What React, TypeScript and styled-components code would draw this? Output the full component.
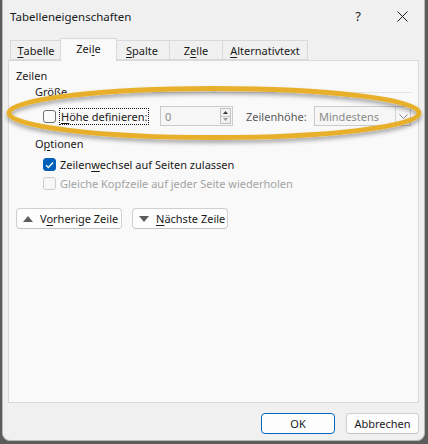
import React from 'react';
import styled, { createGlobalStyle } from 'styled-components';

const GlobalStyle = createGlobalStyle`
  html, body {
    margin: 0;
    padding: 0;
    background: #5c5c5c;
  }
  body {
    font-family: "Noto Sans", "Open Sans", sans-serif;
    font-size: 11px;
    color: #1a1a1a;
    white-space: nowrap;
  }
`;

const Window = styled.div`
  position: relative;
  margin: 0 3px 0 2px;
  height: 440px;
  background: #f0f0f0;
  border: 1px solid #b9b9b9;
  border-top: none;
  border-radius: 0 0 8px 8px;
  display: flex;
  flex-direction: column;
  overflow: hidden;
`;

const TitleBar = styled.div`
  height: 32px;
  display: flex;
  align-items: center;
  padding-left: 7px;
`;

const Title = styled.div`
  flex: 1;
  font-size: 11.5px;
  color: #1a1a1a;
`;

const CaptionButton = styled.div`
  width: 44px;
  height: 32px;
  display: flex;
  align-items: center;
  justify-content: center;
  font-size: 13px;
  color: #1a1a1a;
`;

const Body = styled.div`
  padding: 6px 5px 0 5px;
  display: flex;
  flex-direction: column;
`;

const TabBar = styled.div`
  display: flex;
  align-items: flex-end;
  height: 22px;
  padding-left: 2px;
`;

const Tab = styled.div<{ $w: number; $active?: boolean }>`
  position: relative;
  box-sizing: border-box;
  width: ${(p) => (p.$active ? p.$w + 4 : p.$w)}px;
  height: ${(p) => (p.$active ? 23 : 20)}px;
  margin: ${(p) => (p.$active ? '0 -2px -1px' : '0')};
  z-index: ${(p) => (p.$active ? 2 : 1)};
  display: flex;
  align-items: center;
  justify-content: center;
  padding-bottom: ${(p) => (p.$active ? 3 : 0)}px;
  background: ${(p) => (p.$active ? '#f9f9f9' : '#f0f0f0')};
  border: 1px solid #d9d9d9;
  border-bottom: ${(p) => (p.$active ? 'none' : '1px solid #d9d9d9')};
  border-left: ${(p) => (p.$active ? '1px solid #d9d9d9' : 'none')};
  &:first-child {
    border-left: 1px solid #d9d9d9;
  }
  color: #1a1a1a;
`;

const Panel = styled.div`
  box-sizing: border-box;
  height: 343px;
  background: #f9f9f9;
  border: 1px solid #d9d9d9;
  padding: 7px 6px 0 7px;
  display: flex;
  flex-direction: column;
`;

const SectionTitle = styled.div`
  line-height: 16px;
  height: 16px;
`;

const GroupHeader = styled.div<{ $top: number; $line?: boolean }>`
  display: flex;
  align-items: center;
  margin: ${(p) => p.$top}px 0 0 19px;
  line-height: 16px;
  height: 16px;
  &::after {
    content: '';
    display: ${(p) => (p.$line ? 'block' : 'none')};
    flex: 1;
    height: 1px;
    margin-left: 6px;
    background: #e4e4e4;
  }
`;

const SizeRow = styled.div`
  display: flex;
  align-items: center;
  height: 20px;
  margin: 6px 0 0 27px;
`;

const CheckArea = styled.div`
  width: 117px;
  display: flex;
  align-items: center;
`;

const CheckBox = styled.span<{ $checked?: boolean; $disabled?: boolean }>`
  box-sizing: border-box;
  width: 13px;
  height: 13px;
  flex: none;
  border-radius: 3px;
  border: 1px solid ${(p) => (p.$checked ? '#005fb8' : p.$disabled ? '#cdcdcd' : '#6e6e6e')};
  background: ${(p) => (p.$checked ? '#005fb8' : p.$disabled ? '#f7f7f7' : '#fbfbfb')};
  display: flex;
  align-items: center;
  justify-content: center;
  margin-right: 4px;
`;

const FocusLabel = styled.span`
  outline: 1px dotted #1a1a1a;
  outline-offset: 0;
  padding: 0 1px;
  line-height: 15px;
`;

const NumberBox = styled.div`
  box-sizing: border-box;
  width: 73px;
  height: 20px;
  display: flex;
  align-items: center;
  border: 1px solid #cbcbcb;
  background: #f6f6f6;
  padding-left: 4px;
  color: #8c8c8c;
`;

const NumberValue = styled.span`
  flex: 1;
`;

const Spinner = styled.div`
  box-sizing: border-box;
  width: 11px;
  height: 16px;
  margin-right: 1px;
  border: 1px solid #c2c2c2;
  background: #f1f1f1;
  display: flex;
  flex-direction: column;
`;

const SpinHalf = styled.div<{ $down?: boolean }>`
  flex: 1;
  display: flex;
  align-items: center;
  justify-content: center;
  border-top: ${(p) => (p.$down ? '1px solid #c8c8c8' : 'none')};
`;

const FieldLabel = styled.span`
  width: 68px;
  margin-left: 13px;
  color: #5a5a5a;
`;

const SelectBox = styled.div`
  box-sizing: border-box;
  width: 97px;
  height: 20px;
  display: flex;
  align-items: center;
  border: 1px solid #cbcbcb;
  background: #f6f6f6;
  color: #8c8c8c;
`;

const SelectValue = styled.span`
  flex: 1;
  padding-left: 4px;
`;

const SelectArrow = styled.span`
  width: 14px;
  height: 18px;
  border-left: 1px solid #d2d2d2;
  display: flex;
  align-items: center;
  justify-content: center;
`;

const OptionRow = styled.div<{ $disabled?: boolean; $top: number }>`
  display: flex;
  align-items: center;
  height: 19px;
  margin: ${(p) => p.$top}px 0 0 27px;
  color: ${(p) => (p.$disabled ? '#a3a3a3' : '#1a1a1a')};
`;

const NavRow = styled.div`
  display: flex;
  gap: 10px;
  margin-top: 15px;
`;

const PushButton = styled.div<{ $w: number; $default?: boolean }>`
  box-sizing: border-box;
  width: ${(p) => p.$w}px;
  height: 21px;
  display: flex;
  align-items: center;
  justify-content: ${(p) => (p.$default !== undefined ? 'center' : 'flex-start')};
  padding-left: ${(p) => (p.$default !== undefined ? 0 : 5)}px;
  background: #fdfdfd;
  border: 1px solid ${(p) => (p.$default ? '#0067c0' : '#d0d0d0')};
  border-bottom-color: ${(p) => (p.$default ? '#0067c0' : '#c4c4c4')};
  border-radius: 4px;
  color: #1a1a1a;
`;

const Triangle = styled.span<{ $down?: boolean }>`
  width: 0;
  height: 0;
  border-left: 5px solid transparent;
  border-right: 5px solid transparent;
  ${(p) => (p.$down ? 'border-top: 6px solid #5e5e5e;' : 'border-bottom: 6px solid #5e5e5e;')}
  margin-right: 7px;
  margin-left: 1px;
`;

const Footer = styled.div`
  display: flex;
  justify-content: flex-end;
  gap: 11px;
  padding: 10px 5px 0 0;
`;

const Highlight = styled.svg`
  position: absolute;
  left: -2px;
  top: 78px;
  pointer-events: none;
`;

const U = styled.span`
  text-decoration: underline;
  text-underline-offset: 2px;
`;

const tabs = [
  { key: 't', w: 52, label: <><U>T</U>abelle</> },
  { key: 'z', w: 53, label: <>Zei<U>l</U>e</>, active: true },
  { key: 's', w: 55, label: <><U>S</U>palte</> },
  { key: 'c', w: 53, label: <>Z<U>e</U>lle</> },
  { key: 'a', w: 85, label: <><U>A</U>lternativtext</> },
];

const Check = () => (
  <svg width="9" height="8" viewBox="0 0 9 8">
    <path d="M1 4.2 L3.4 6.5 L8 1.5" fill="none" stroke="#fff" strokeWidth="1.3" />
  </svg>
);

export default function App() {
  return (
    <>
      <GlobalStyle />
      <Window>
        <TitleBar>
          <Title>Tabelleneigenschaften</Title>
          <CaptionButton>?</CaptionButton>
          <CaptionButton>
            <svg width="11" height="11" viewBox="0 0 11 11">
              <path d="M0.5 0.5 L10.5 10.5 M10.5 0.5 L0.5 10.5" stroke="#1a1a1a" strokeWidth="1" />
            </svg>
          </CaptionButton>
        </TitleBar>
        <Body>
          <TabBar>
            {tabs.map((t) => (
              <Tab key={t.key} $w={t.w} $active={t.active}>
                {t.label}
              </Tab>
            ))}
          </TabBar>
          <Panel>
            <SectionTitle>Zeilen</SectionTitle>
            <GroupHeader $top={0} $line>Größe</GroupHeader>
            <SizeRow>
              <CheckArea>
                <CheckBox />
                <FocusLabel><U>H</U>öhe definieren:</FocusLabel>
              </CheckArea>
              <NumberBox>
                <NumberValue>0</NumberValue>
                <Spinner>
                  <SpinHalf>
                    <svg width="5" height="3" viewBox="0 0 5 3"><path d="M0 3 L2.5 0 L5 3Z" fill="#3a3a3a" /></svg>
                  </SpinHalf>
                  <SpinHalf $down>
                    <svg width="5" height="3" viewBox="0 0 5 3"><path d="M0 0 L2.5 3 L5 0Z" fill="#9a9a9a" /></svg>
                  </SpinHalf>
                </Spinner>
              </NumberBox>
              <FieldLabel>Zeilenhöhe:</FieldLabel>
              <SelectBox>
                <SelectValue>Mindestens</SelectValue>
                <SelectArrow>
                  <svg width="9" height="5" viewBox="0 0 9 5">
                    <path d="M0.5 0.5 L4.5 4.5 L8.5 0.5" fill="none" stroke="#8a8a8a" strokeWidth="1" />
                  </svg>
                </SelectArrow>
              </SelectBox>
            </SizeRow>
            <GroupHeader $top={10}>O<U>p</U>tionen</GroupHeader>
            <OptionRow $top={3}>
              <CheckBox $checked><Check /></CheckBox>
              <span>Zeilen<U>w</U>echsel auf Seiten zulassen</span>
            </OptionRow>
            <OptionRow $top={0} $disabled>
              <CheckBox $disabled />
              <span>Gleiche Kopfzeile auf jeder Seite wiederholen</span>
            </OptionRow>
            <NavRow>
              <PushButton $w={106}>
                <Triangle />
                <span>V<U>o</U>rherige Zeile</span>
              </PushButton>
              <PushButton $w={96}>
                <Triangle $down />
                <span><U>N</U>ächste Zeile</span>
              </PushButton>
            </NavRow>
          </Panel>
        </Body>
        <Footer>
          <PushButton $w={74} $default>OK</PushButton>
          <PushButton $w={73} $default={false}>Abbrechen</PushButton>
        </Footer>
        <Highlight width="428" height="72" viewBox="0 0 428 72">
          <defs>
            <filter id="shadow" x="-10%" y="-50%" width="120%" height="200%">
              <feDropShadow dx="0" dy="3" stdDeviation="2" floodColor="#000" floodOpacity="0.35" />
            </filter>
          </defs>
          <ellipse cx="213" cy="35" rx="205" ry="24.5" fill="none" stroke="#e8b02c" strokeWidth="4.8" filter="url(#shadow)" />
        </Highlight>
      </Window>
    </>
  );
}
